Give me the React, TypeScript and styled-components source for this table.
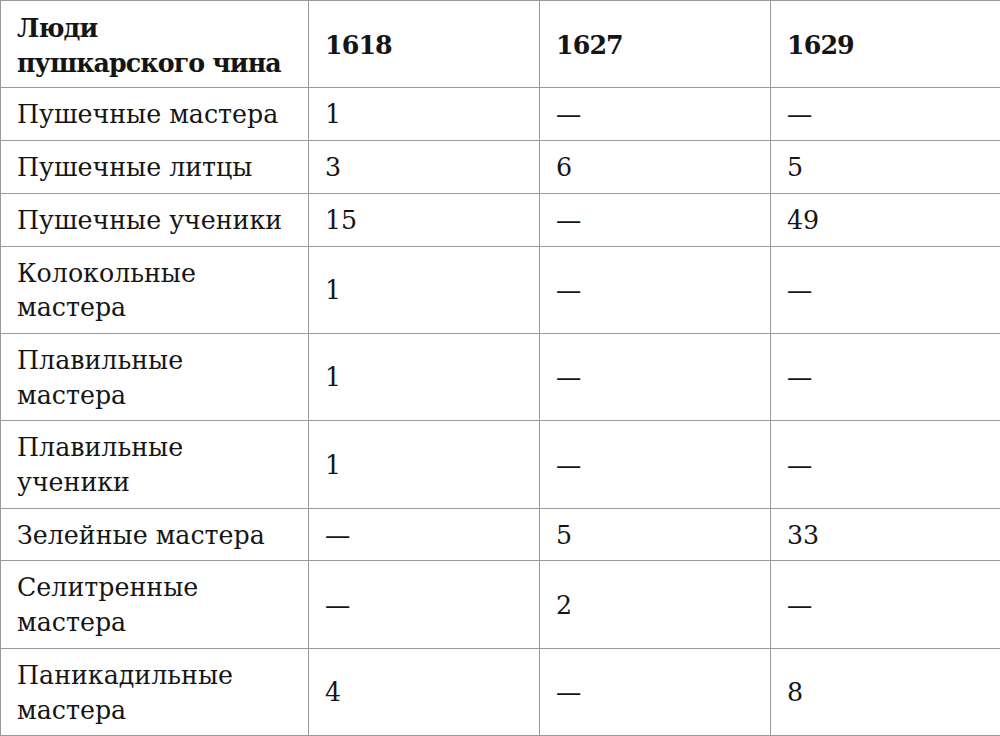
import React from "react";
import styled, { createGlobalStyle } from "styled-components";

const GlobalStyle = createGlobalStyle`
  html, body {
    margin: 0;
    padding: 0;
    background: #ffffff;
  }
  body {
    font-family: "DejaVu Serif", "Liberation Serif", serif;
    color: #151515;
  }
`;

const Table = styled.table`
  width: 1000px;
  border-collapse: collapse;
  table-layout: fixed;
  font-family: "DejaVu Serif", "Liberation Serif", serif;
  font-size: 25.3px;
  line-height: 34.7px;
  color: #151515;
`;

const Col = styled.col<{ $w: number }>`
  width: ${(p) => p.$w}px;
`;

const HeadCell = styled.th`
  border: 1px solid #9a9a9a;
  padding: 10px 12px 7px 16px;
  text-align: left;
  vertical-align: middle;
  font-weight: 700;
  letter-spacing: -0.9px;
`;

const Cell = styled.td`
  border: 1px solid #9a9a9a;
  padding: 10px 12px 7px 16px;
  text-align: left;
  vertical-align: middle;
  font-weight: 400;
`;

const rows: [string, string, string, string][] = [
  ["Пушечные мастера", "1", "—", "—"],
  ["Пушечные литцы", "3", "6", "5"],
  ["Пушечные ученики", "15", "—", "49"],
  ["Колокольные мастера", "1", "—", "—"],
  ["Плавильные мастера", "1", "—", "—"],
  ["Плавильные ученики", "1", "—", "—"],
  ["Зелейные мастера", "—", "5", "33"],
  ["Селитренные мастера", "—", "2", "—"],
  ["Паникадильные мастера", "4", "—", "8"],
];

export default function App() {
  return (
    <>
      <GlobalStyle />
      <Table>
        <colgroup>
          <Col $w={308} />
          <Col $w={231} />
          <Col $w={231} />
          <Col $w={230} />
        </colgroup>
        <thead>
          <tr>
            <HeadCell>
              Люди
              <br />
              пушкарского чина
            </HeadCell>
            <HeadCell>1618</HeadCell>
            <HeadCell>1627</HeadCell>
            <HeadCell>1629</HeadCell>
          </tr>
        </thead>
        <tbody>
          {rows.map((r) => (
            <tr key={r[0]}>
              {r.map((c, i) => (
                <Cell key={i}>{c}</Cell>
              ))}
            </tr>
          ))}
        </tbody>
      </Table>
    </>
  );
}
